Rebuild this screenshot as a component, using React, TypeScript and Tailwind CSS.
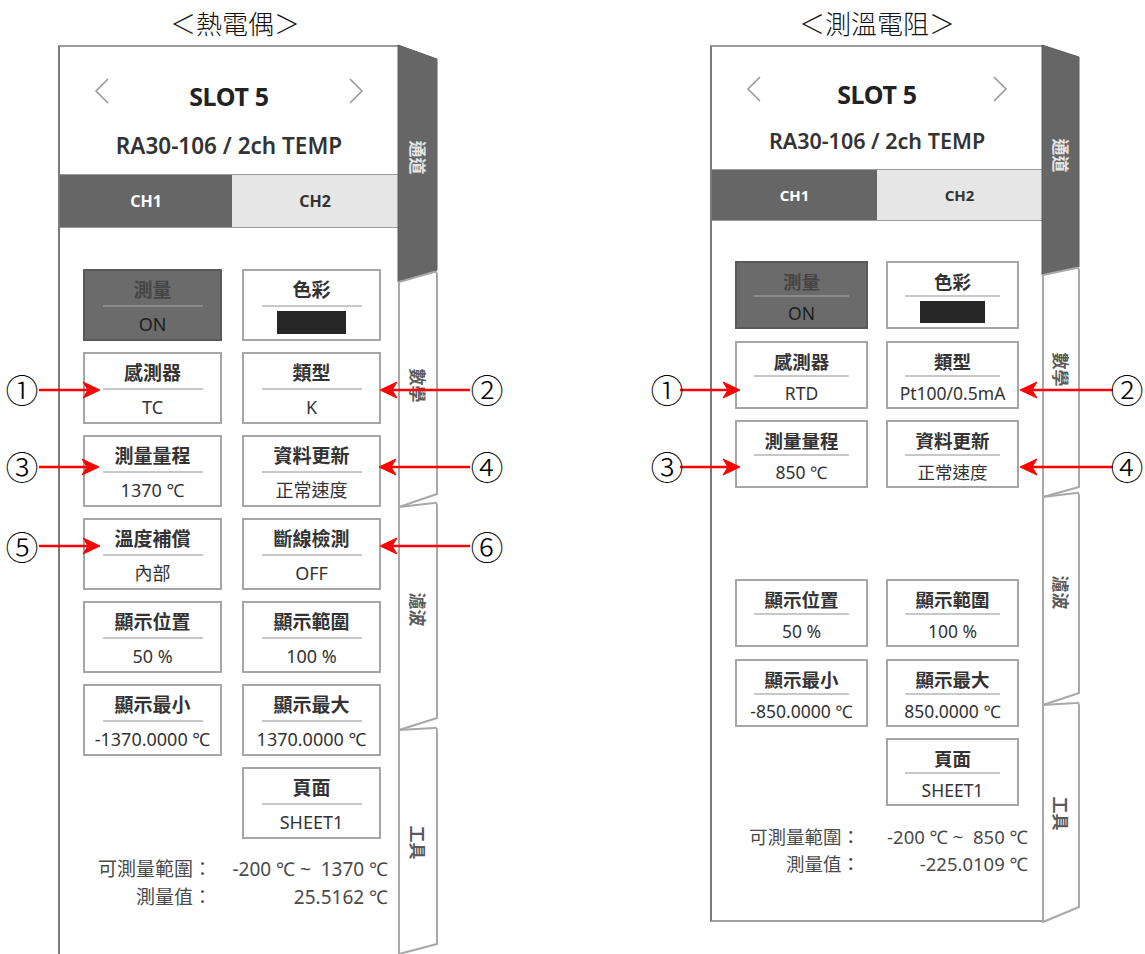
import React from 'react';

type Kind = 'on' | 'color' | 'empty' | 'normal';
type CardData = { label: string; value?: string; kind?: Kind };

type TabShape = { lt: number; rt: number; rb: number; lb: number };

type Variant = {
  figure: string;
  titleW: string;
  panel: string;
  header: string;
  slot: string;
  model: string;
  ch1: string;
  ch: string;
  body: string;
  grid: string;
  card: string;
  labelMt: string;
  label: string;
  divider: string;
  value: string;
  swatch: string;
  text: string;
  info: string;
  infoLabel: string;
  infoValue: string;
  tabsBox: string;
  tabW: number;
  tabH: number;
  shapes: TabShape[];
  tabCells: string[];
};

const LEFT: Variant = {
  figure: 'ml-[58px]',
  titleW: 'w-[354px]',
  panel: 'w-[340px] h-[909px] border-l-2 border-t-2',
  header: 'h-[127px] pt-[32px]',
  slot: 'text-[25px]',
  model: 'mt-[19px] text-[22.5px]',
  ch1: 'w-[172px]',
  ch: 'h-[54px] text-[16px]',
  body: 'pt-[41px]',
  grid: 'pl-[23px] grid-cols-[139px_139px] gap-x-[20px] gap-y-[11px]',
  card: 'h-[72px]',
  labelMt: 'mt-[7px]',
  label: 'text-[19px]',
  divider: 'mt-[3px] w-[100px]',
  value: 'mt-[5px]',
  swatch: 'mt-[4px] w-[69px] h-[23px]',
  text: 'text-[18px]',
  info: 'mt-[16px] leading-[28px] text-[19px]',
  infoLabel: 'w-[152px]',
  infoValue: 'pr-[10px]',
  tabsBox: 'w-[40px] h-[909px]',
  tabW: 39,
  tabH: 909,
  shapes: [
    { lt: 0, rt: 14, rb: 225, lb: 237 },
    { lt: 237, rt: 226, rb: 449, lb: 462 },
    { lt: 462, rt: 457, rb: 673, lb: 685 },
    { lt: 685, rt: 682, rb: 899, lb: 909 },
  ],
  tabCells: ['h-[237px] pb-[12px]', 'h-[225px] pb-[18px]', 'h-[223px] pb-[18px]', 'h-[224px]'],
};

const RIGHT: Variant = {
  figure: 'ml-[272px]',
  titleW: 'w-[334px]',
  panel: 'w-[332px] h-[877px] border-l-2 border-t-2 border-b-2',
  header: 'h-[122px] pt-[30px]',
  slot: 'text-[25px]',
  model: 'mt-[16px] text-[21.5px]',
  ch1: 'w-[165px]',
  ch: 'h-[52px] text-[15px]',
  body: 'pt-[40px]',
  grid: 'pl-[23px] grid-cols-[133px_133px] gap-x-[18px] gap-y-[11.5px]',
  card: 'h-[68px]',
  labelMt: 'mt-[7px]',
  label: 'text-[18.5px]',
  divider: 'mt-[1px] w-[95px]',
  value: 'mt-[4px]',
  swatch: 'mt-[4px] w-[65px] h-[22px]',
  text: 'text-[17.5px]',
  info: 'mt-[17px] leading-[27px] text-[18.5px]',
  infoLabel: 'w-[148px]',
  infoValue: 'pr-[14px]',
  tabsBox: 'w-[37px] h-[877px]',
  tabW: 37,
  tabH: 877,
  shapes: [
    { lt: 0, rt: 12, rb: 222, lb: 230 },
    { lt: 230, rt: 222, rb: 442, lb: 452 },
    { lt: 452, rt: 447, rb: 648, lb: 660 },
    { lt: 660, rt: 657, rb: 862, lb: 877 },
  ],
  tabCells: ['h-[230px] pb-[10px]', 'h-[222px] pb-[34px]', 'h-[208px] pb-[18px]', 'h-[217px]'],
};

const tabLabels = ['通道', '數學', '濾波', '工具'];

const thermocouple: CardData[] = [
  { label: '測量', value: 'ON', kind: 'on' },
  { label: '色彩', kind: 'color' },
  { label: '感測器', value: 'TC' },
  { label: '類型', value: 'K' },
  { label: '測量量程', value: '1370 ℃' },
  { label: '資料更新', value: '正常速度' },
  { label: '溫度補償', value: '內部' },
  { label: '斷線檢測', value: 'OFF' },
  { label: '顯示位置', value: '50 %' },
  { label: '顯示範圍', value: '100 %' },
  { label: '顯示最小', value: '-1370.0000 ℃' },
  { label: '顯示最大', value: '1370.0000 ℃' },
  { label: '', kind: 'empty' },
  { label: '頁面', value: 'SHEET1' },
];

const rtd: CardData[] = [
  { label: '測量', value: 'ON', kind: 'on' },
  { label: '色彩', kind: 'color' },
  { label: '感測器', value: 'RTD' },
  { label: '類型', value: 'Pt100/0.5mA' },
  { label: '測量量程', value: '850 ℃' },
  { label: '資料更新', value: '正常速度' },
  { label: '', kind: 'empty' },
  { label: '', kind: 'empty' },
  { label: '顯示位置', value: '50 %' },
  { label: '顯示範圍', value: '100 %' },
  { label: '顯示最小', value: '-850.0000 ℃' },
  { label: '顯示最大', value: '850.0000 ℃' },
  { label: '', kind: 'empty' },
  { label: '頁面', value: 'SHEET1' },
];

const Chevron = ({ dir }: { dir: 'left' | 'right' }) => (
  <svg width="16" height="26" viewBox="0 0 16 26" className="-translate-y-[5px]">
    <polyline
      points={dir === 'left' ? '14,1 2,13 14,25' : '2,1 14,13 2,25'}
      fill="none"
      stroke="#9a9a9a"
      strokeWidth="1.6"
    />
  </svg>
);

function Card({ item, v }: { item: CardData; v: Variant }) {
  if (item.kind === 'empty') return <div className={v.card} />;
  const on = item.kind === 'on';
  return (
    <div
      className={`${v.card} ${v.text} flex flex-col items-center border-2 ${
        on ? 'bg-[#6b6b6b] border-[#5a5a5a]' : 'bg-white border-[#a6a6a6]'
      }`}
    >
      <div className={`${v.labelMt} ${v.label} leading-[24px] font-bold ${on ? 'text-[#454545]' : 'text-[#333]'}`}>
        {item.label}
      </div>
      <div className={`${v.divider} h-[2px] ${on ? 'bg-[#8a8a8a]' : 'bg-[#c8c8c8]'}`} />
      {item.kind === 'color' ? (
        <div className={`${v.swatch} bg-[#262626]`} />
      ) : (
        <div className={`${v.value} leading-[24px] whitespace-nowrap ${on ? 'text-[#1e1e1e]' : 'text-[#333]'}`}>
          {item.value}
        </div>
      )}
    </div>
  );
}

function SideTabs({ v }: { v: Variant }) {
  const w = v.tabW;
  return (
    <div className={`relative flex-none ${v.tabsBox}`}>
      <svg className="absolute inset-0 overflow-visible" width={w + 1} height={v.tabH}>
        {v.shapes.map((s, i) =>
          i === 0 ? (
            <path
              key={i}
              d={`M0,${s.lt} L${w},${s.rt} L${w},${s.rb} L0,${s.lb} Z`}
              fill="#666"
              stroke="#5c5c5c"
              strokeWidth="1"
            />
          ) : (
            <path
              key={i}
              d={`M1,${s.lb} L1,${s.lt} L${w - 3},${s.rt + 1} Q${w},${s.rt} ${w},${s.rt + 4} L${w},${s.rb} Z`}
              fill="#fff"
              stroke="#a8a8a8"
              strokeWidth="2"
              strokeLinejoin="round"
            />
          )
        )}
      </svg>
      <div className="relative flex flex-col">
        {v.tabCells.map((cell, i) => (
          <div key={i} className={`${cell} flex items-center justify-center pr-[2px]`}>
            <span
              className={`inline-block rotate-90 whitespace-nowrap text-[17px] font-bold leading-none ${
                i === 0 ? 'text-[#e6e6e6]' : 'text-[#5a5a5a]'
              }`}
            >
              {tabLabels[i]}
            </span>
          </div>
        ))}
      </div>
    </div>
  );
}

function Figure({
  v,
  title,
  cards,
  range,
  reading,
}: {
  v: Variant;
  title: string;
  cards: CardData[];
  range: string;
  reading: string;
}) {
  return (
    <div className={`${v.figure} flex flex-col`}>
      <div
        className={`${v.titleW} h-[45px] flex items-center justify-center text-[26px] font-light text-[#111] font-['Noto_Sans_CJK_TC',sans-serif]`}
      >
        {title}
      </div>
      <div className="flex items-start">
        <div className={`${v.panel} flex-none flex flex-col bg-white border-l-[#7a7a7a] border-t-[#9c9c9c] border-b-[#a0a0a0]`}>
          {/* header */}
          <div className={`${v.header} flex flex-col`}>
            <div className="flex items-center justify-between px-[34px] leading-[34px]">
              <Chevron dir="left" />
              <span className={`${v.slot} font-bold text-[#222] tracking-[-0.3px]`}>SLOT 5</span>
              <Chevron dir="right" />
            </div>
            <div className={`${v.model} text-center leading-[28px] font-semibold text-[#333]`}>
              RA30-106 / 2ch TEMP
            </div>
          </div>

          {/* channel tabs */}
          <div className={`${v.ch} flex border-y border-[#9a9a9a] font-bold`}>
            <div className={`${v.ch1} flex-none flex items-center justify-center bg-[#666] text-white`}>CH1</div>
            <div className="flex-1 flex items-center justify-center bg-[#e6e6e6] text-[#333]">CH2</div>
          </div>

          {/* settings */}
          <div className={`${v.body} flex flex-col`}>
            <div className={`grid ${v.grid}`}>
              {cards.map((c, i) => (
                <Card key={i} item={c} v={v} />
              ))}
            </div>
            <div className={`${v.info} text-[#4a4a4a]`}>
              <div className="flex">
                <span className={`${v.infoLabel} text-right`}>可測量範圍：</span>
                <span className={`flex-1 text-right whitespace-pre ${v.infoValue}`}>{range}</span>
              </div>
              <div className="flex">
                <span className={`${v.infoLabel} text-right`}>測量值：</span>
                <span className={`flex-1 text-right whitespace-pre ${v.infoValue}`}>{reading}</span>
              </div>
            </div>
          </div>
        </div>
        <SideTabs v={v} />
      </div>
    </div>
  );
}

// red callout arrows: [x1, x2 (tip), y]
const arrows: [number, number, number][] = [
  [39, 100, 390],
  [39, 99, 467],
  [39, 100, 546],
  [470, 380, 390],
  [470, 379, 467],
  [470, 380, 546],
  [680, 740, 390],
  [680, 740, 467],
  [1113, 1020, 390],
  [1113, 1020, 467],
];

const Mark = ({ n, className }: { n: string; className: string }) => (
  <span
    className={`absolute w-[30px] h-[30px] flex items-center justify-center text-[33px] font-light leading-none text-black font-['Noto_Sans_CJK_JP',sans-serif] ${className}`}
  >
    {n}
  </span>
);

const App: React.FC = () => {
  return (
    <div className="relative w-[1145px] h-[954px] overflow-hidden bg-white flex items-start font-['Noto_Sans','Noto_Sans_CJK_TC',sans-serif]">
      <Figure v={LEFT} title="＜熱電偶＞" cards={thermocouple} range="-200 ℃ ~  1370 ℃" reading="25.5162 ℃" />
      <Figure v={RIGHT} title="＜測溫電阻＞" cards={rtd} range="-200 ℃ ~  850 ℃" reading="-225.0109 ℃" />

      {/* callouts */}
      <svg className="absolute inset-0 pointer-events-none" width="1145" height="954">
        {arrows.map(([x1, x2, y], i) => {
          const d = x2 > x1 ? 1 : -1;
          return (
            <g key={i} fill="#ff0000" stroke="#ff0000">
              <line x1={x1} y1={y} x2={x2 - d * 10} y2={y} strokeWidth="2.5" />
              <polygon
                points={`${x2},${y} ${x2 - d * 17},${y - 8} ${x2 - d * 12},${y} ${x2 - d * 17},${y + 8}`}
                strokeWidth="1"
                strokeLinejoin="round"
              />
            </g>
          );
        })}
      </svg>
      <Mark n="①" className="left-[7px] top-[374px]" />
      <Mark n="③" className="left-[7px] top-[451px]" />
      <Mark n="⑤" className="left-[7px] top-[531px]" />
      <Mark n="②" className="left-[472px] top-[374px]" />
      <Mark n="④" className="left-[472px] top-[451px]" />
      <Mark n="⑥" className="left-[472px] top-[531px]" />
      <Mark n="①" className="left-[652px] top-[374px]" />
      <Mark n="③" className="left-[652px] top-[451px]" />
      <Mark n="②" className="left-[1112px] top-[374px]" />
      <Mark n="④" className="left-[1112px] top-[451px]" />
    </div>
  );
};

export default App;
